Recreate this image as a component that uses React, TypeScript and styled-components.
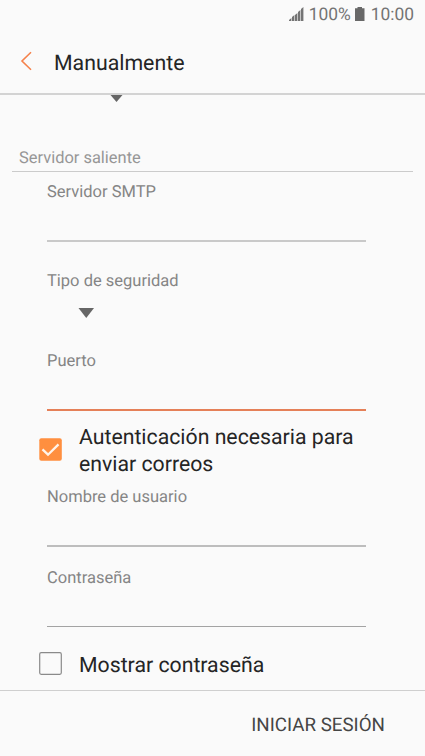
import styled, { createGlobalStyle } from "styled-components";

const GlobalStyle = createGlobalStyle`
  * {
    box-sizing: border-box;
  }
  body {
    margin: 0;
    background: #fafafa;
    font-family: Roboto, "Liberation Sans", sans-serif;
    text-rendering: geometricPrecision;
  }
`;

const Screen = styled.div`
  display: flex;
  flex-direction: column;
  height: 756px;
  overflow: hidden;
  background: #fafafa;
`;

const StatusBar = styled.div`
  display: flex;
  justify-content: flex-end;
  align-items: center;
  height: 30px;
  padding: 0 11px 0 0;
  color: #747474;
  font-size: 17.4px;
  line-height: 30px;
`;

const SignalIcon = styled.svg`
  margin: 0 5px 2px 0;
`;

const BatteryIcon = styled.svg`
  margin: 0 6px 2px 4px;
`;

const Header = styled.header`
  display: flex;
  align-items: center;
  height: 65px;
  border-bottom: 2px solid #d3d3d3;
  padding-left: 20px;
`;

const BackButton = styled.button`
  display: flex;
  margin: 0;
  padding: 0 0 1px;
  border: 0;
  background: none;
`;

const Title = styled.h1`
  margin: 4px 0 0 21px;
  color: #252525;
  font-size: 21.3px;
  font-weight: 400;
  line-height: 28px;
`;

const Form = styled.main`
  flex: 1;
`;

const Arrow = styled.svg<{ $left: number; $top: number }>`
  display: block;
  margin: ${(p) => p.$top}px 0 0 ${(p) => p.$left}px;
`;

const Section = styled.h2`
  margin: 47px 12px 0;
  padding: 0 7px 2px;
  border-bottom: 1px solid #cbcbcb;
  color: #969696;
  font-size: 16.45px;
  font-weight: 400;
  line-height: 20px;
`;

const Field = styled.div<{ $top: number; $height?: string }>`
  width: 319px;
  height: ${(p) => p.$height || "auto"};
  margin: ${(p) => p.$top}px 0 0 47px;
`;

const Label = styled.label`
  display: block;
  height: 20px;
  color: #858585;
  font-size: 16.5px;
  line-height: 24px;
`;

const Input = styled.input<{ $line: string; $width: number }>`
  display: block;
  width: 100%;
  height: ${(p) => 39 + p.$width}px;
  padding: 0;
  border: 0;
  border-bottom: ${(p) => p.$width}px solid ${(p) => p.$line};
  border-radius: 0;
  outline: none;
  background: none;
  color: #252525;
  font: inherit;
`;

const CheckRow = styled.div<{ $top: number }>`
  display: flex;
  align-items: center;
  margin: ${(p) => p.$top}px 0 0 39px;
  color: #252525;
  font-size: 21.25px;
  line-height: 27px;
`;

const CheckIcon = styled.svg`
  flex: none;
  margin: 0 16px 3px 0;
`;

const Footer = styled.footer`
  display: flex;
  justify-content: flex-end;
  align-items: center;
  height: 66px;
  padding: 2px 40px 0 0;
  border-top: 1px solid #cfcfcf;
`;

const SignInButton = styled.button`
  padding: 0;
  border: 0;
  background: none;
  color: #454545;
  font-family: inherit;
  font-size: 18.75px;
  line-height: 24px;
  text-rendering: inherit;
`;

export default function App() {
  return (
    <>
      <GlobalStyle />
      <Screen>
        <StatusBar>
          <SignalIcon width="15" height="14" viewBox="0 0 15 14" fill="#747474">
            <path d="M0 14v-1l2.400-2v3zM3 14v-4l2.400-2v6zM6 14V8l2.400-2v8zM9 14V5l2.400-2v11zM12 14V2l2.400-2v14z" />
          </SignalIcon>
          <span>100%</span>
          <BatteryIcon width="10" height="14" viewBox="0 0 10 14" fill="#686868">
            <path d="M2.500 0h4.500v1.200h2.500V14H0V1.200h2.500z" />
          </BatteryIcon>
          <span>10:00</span>
        </StatusBar>
        <Header>
          <BackButton aria-label="Atrás">
            <svg width="13" height="20" viewBox="0 0 13 20" fill="none" stroke="#f5814a" strokeWidth="1.6">
              <path d="M11 1.2L2 10l9 8.8" />
            </svg>
          </BackButton>
          <Title>Manualmente</Title>
        </Header>
        <Form>
          <Arrow $top={0} $left={110} width="13" height="7" viewBox="0 0 13 7" fill="#666">
            <path d="M.5 0h12l-6 7z" />
          </Arrow>
          <Section>Servidor saliente</Section>
          <Field $top={9}>
            <Label htmlFor="smtp">Servidor SMTP</Label>
            <Input id="smtp" $line="#c9c9c9" $width={2} />
          </Field>
          <Field $top={28} $height="80px">
            <Label>Tipo de seguridad</Label>
            <Arrow $top={18} $left={31} width="17" height="10" viewBox="0 0 17 10" fill="#666">
              <path d="M.5 0h15.500L8.250 10z" />
            </Arrow>
          </Field>
          <Field $top={0}>
            <Label htmlFor="port">Puerto</Label>
            <Input id="port" $line="#e58058" $width={2} />
          </Field>
          <CheckRow $top={13}>
            <CheckIcon width="24" height="24" viewBox="0 0 24 24">
              <rect x=".3" y=".2" width="22.500" height="22.500" rx="2" fill="#ff8f3f" />
              <path d="M3.500 11.400l5.500 5.300L19.500 6.400" fill="none" stroke="#fff4ea" strokeWidth="2.300" />
            </CheckIcon>
            <span>
              Autenticación necesaria para
              <br />
              enviar correos
            </span>
          </CheckRow>
          <Field $top={8}>
            <Label htmlFor="user">Nombre de usuario</Label>
            <Input id="user" $line="#bdbdbd" $width={2} />
          </Field>
          <Field $top={20}>
            <Label htmlFor="password">Contraseña</Label>
            <Input id="password" $line="#a3a3a3" $width={1} />
          </Field>
          <CheckRow $top={25}>
            <CheckIcon width="24" height="24" viewBox="0 0 24 24">
              <rect x=".7" y=".7" width="21.600" height="21.600" rx="1.500" fill="none" stroke="#8a8a8a" strokeWidth="1.200" />
            </CheckIcon>
            <span>Mostrar contraseña</span>
          </CheckRow>
        </Form>
        <Footer>
          <SignInButton>INICIAR SESIÓN</SignInButton>
        </Footer>
      </Screen>
    </>
  );
}
